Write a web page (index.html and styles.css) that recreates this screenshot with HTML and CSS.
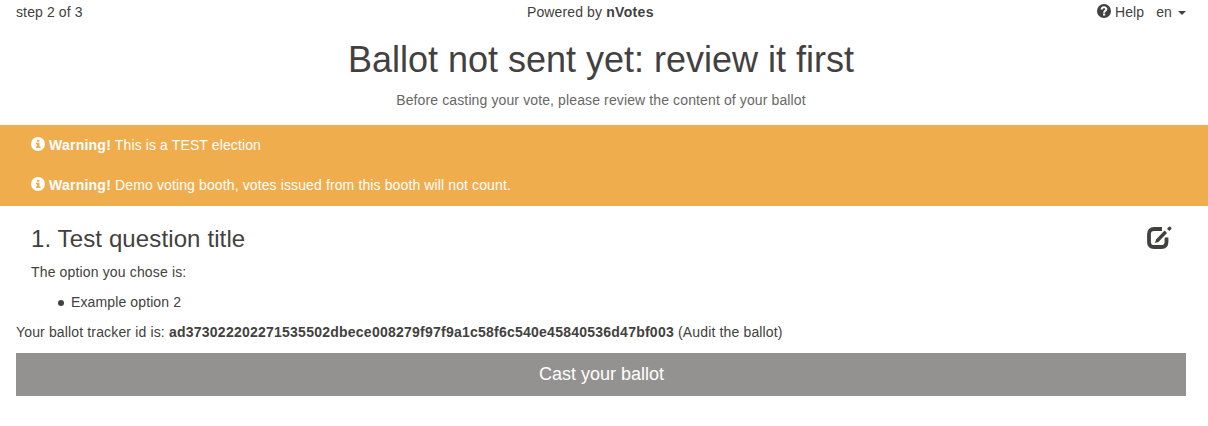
FILE: index.html
```html
<!DOCTYPE html>
<html lang="en">
<head>
<meta charset="utf-8">
<title>Review your ballot</title>
<link rel="stylesheet" href="styles.css">
</head>
<body>
<header class="topbar">
  <span class="step">step 2 of 3</span>
  <span class="brand">Powered by <b>nVotes</b></span>
  <nav class="tools">
    <a class="help"><svg class="ico" viewBox="0 0 14 14"><circle cx="7" cy="7" r="7" fill="#424140"/><path d="M4.600 5.600C4.600 2.500 9.400 2.700 9.400 5.100C9.400 6.800 7.100 6.700 7.100 8.700" fill="none" stroke="#fff" stroke-width="2"/><path d="M6 9.500h2.200v2H6z" fill="#fff"/></svg><span class="help-text">Help</span></a>
    <a class="lang">en <span class="caret"></span></a>
  </nav>
</header>
<section class="intro">
  <h1>Ballot not sent yet: review it first</h1>
  <p>Before casting your vote, please review the content of your ballot</p>
</section>
<section class="warnings">
  <p><svg class="ico" viewBox="0 0 14 14"><circle cx="7" cy="7" r="7" fill="#fff"/><path d="M6 3h2.500v1.800H6zM5 5.800h3.500v3.700h1v1.500H5V9.500h1V7.200H5z" fill="#f0ad4e"/></svg><span class="msg"><b>Warning!</b> This is a TEST election</span></p>
  <p><svg class="ico" viewBox="0 0 14 14"><circle cx="7" cy="7" r="7" fill="#fff"/><path d="M6 3h2.500v1.800H6zM5 5.800h3.500v3.700h1v1.500H5V9.500h1V7.200H5z" fill="#f0ad4e"/></svg><span class="msg"><b>Warning!</b> Demo voting booth, votes issued from this booth will not count.</span></p>
</section>
<main>
  <div class="question">
    <div class="question-head">
      <h2>1. Test question title</h2>
      <svg class="edit" viewBox="0 0 26 24"><path d="M16 3H8Q3 3 3 8v8q0 5 5 5h7.500q5 0 5-5v-4.500" fill="none" stroke="#424140" stroke-width="3.800"/><path d="M21.500 4.500L10.500 15.500" stroke="#fff" stroke-width="6"/><path d="M9 17l1-3.500 8.600-9 2.400 2.400-8.600 9zM21 2.800l2-2q.7-.6 1.400 0l.9.9q.6.7 0 1.400l-2 2z" fill="#424140"/></svg>
    </div>
    <p class="chosen">The option you chose is:</p>
    <ul><li>Example option 2</li></ul>
  </div>
  <p class="tracker">Your ballot tracker id is: <b>ad373022202271535502dbece008279f97f9a1c58f6c540e45840536d47bf003</b> (Audit the ballot)</p>
  <button class="cast">Cast your ballot</button>
</main>
</body>
</html>
```
FILE: styles.css
```css
* { box-sizing: border-box; }
body { margin: 0; background: #fff; color: #424140; font: 14px/20px "Liberation Sans", Arial, sans-serif; letter-spacing: .12px; }
h1, h2, p, ul { margin: 0; font-weight: normal; }
b { letter-spacing: .24px; }
.topbar { display: grid; grid-template-columns: 511px auto 1fr; height: 24px; padding: 2px 22px 0 16px; }
.brand b { letter-spacing: .33px; }
.tools { display: flex; justify-content: flex-end; align-items: flex-start; gap: 12px; }
.help, .lang { display: flex; height: 20px; }
.help { gap: 4px; }
.help .ico { margin-top: 2px; }
.ico { width: 14px; height: 14px; flex: none; }
.caret { width: 8px; height: 4px; border: 4px solid transparent; border-top-color: #424140; border-bottom: 0; margin: 9px 0 0 6px; }
.intro { height: 101px; padding: 16px 22px 0 16px; text-align: center; }
.intro h1 { font-size: 36px; line-height: 40px; letter-spacing: 0; }
.intro p { margin-top: 10px; color: #686766; }
.warnings { height: 81px; padding: 10px 31px; background: #f0ad4e; color: #fff; }
.warnings p { display: flex; gap: 4px; margin-bottom: 20px; }
.warnings .ico { margin-top: 2px; }
main { padding: 20px 22px 0 16px; }
.question { padding: 0 15px; }
.question-head { display: flex; justify-content: space-between; height: 36px; }
h2 { font-size: 24px; line-height: 26px; }
.edit { width: 26px; height: 24px; margin-right: -1px; }
.chosen, .tracker { letter-spacing: .15px; }
ul { padding: 0; margin: 10px 0; list-style: none; }
li { display: flex; align-items: center; }
li::before { content: ""; width: 6px; height: 6px; margin: 1px 7px 0 27px; border-radius: 50%; background: #424140; }
.cast { display: block; width: 100%; height: 43px; margin-top: 11px; padding: 0 0 2px 1px; border: 0; background: #949290; color: #fff; font: 18px/24px "Liberation Sans", Arial, sans-serif; }
```
